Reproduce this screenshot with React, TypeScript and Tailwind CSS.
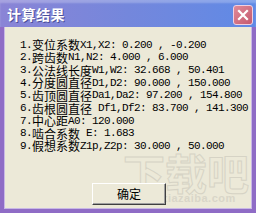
import React from "react";

const lines = [
  "1.变位系数X1,X2: 0.200 , -0.200",
  "2.跨齿数N1,N2: 4.000 , 6.000",
  "3.公法线长度W1,W2: 32.668 , 50.401",
  "4.分度圆直径D1,D2: 90.000 , 150.000",
  "5.齿顶圆直径Da1,Da2: 97.200 , 154.800",
  "6.齿根圆直径 Df1,Df2: 83.700 , 141.300",
  "7.中心距A0: 120.000",
  "8.啮合系数 E: 1.683",
  "9.假想系数Z1p,Z2p: 30.000 , 50.000",
];

function Line({ text }: { text: string }) {
  const parts = text.match(/[\u4e00-\u9fff]+|[^\u4e00-\u9fff]+/g) || [];
  return (
    <div className="flex h-[12.65px] items-center whitespace-pre">
      {parts.map((p, i) =>
        /[\u4e00-\u9fff]/.test(p) ? (
          <span
            key={i}
            className="text-[12px] leading-none text-black [font-family:'Noto_Sans_CJK_SC',sans-serif]"
          >
            {p}
          </span>
        ) : (
          <span
            key={i}
            className="text-[11px] leading-none tracking-[-0.6px] text-black [font-family:'Liberation_Mono',monospace]"
          >
            {p}
          </span>
        )
      )}
    </div>
  );
}

export default function App() {
  return (
    <div className="relative flex h-[213px] w-[256px] flex-col overflow-hidden bg-[#8f6cc6]">
      {/* Title bar */}
      <div className="flex h-[27px] shrink-0 items-center justify-between bg-gradient-to-r from-[#8a84d6] via-[#7487dc] to-[#5f8ae6] pl-[7px] pr-[3px] shadow-[inset_0_3px_2px_rgba(255,255,255,0.25)]">
        <div className="text-[14px] font-bold leading-none tracking-[0.5px] text-white [font-family:'Noto_Sans_CJK_SC',sans-serif] [text-shadow:1px_1px_0_#4a4f9a]">
          计算结果
        </div>
        <div className="mt-[2px] flex h-[20px] w-[20px] items-center justify-center rounded-[3px] border border-[#f0d0e0] bg-gradient-to-br from-[#e08a98] to-[#c45a70]">
          <svg width="12" height="12" viewBox="0 0 12 12">
            <path d="M2 2 L10 10 M10 2 L2 10" stroke="white" strokeWidth="2.2" strokeLinecap="square" />
          </svg>
        </div>
      </div>
      {/* Body */}
      <div className="flex flex-1 flex-col px-[4px] pb-[4px]">
        <div className="relative flex flex-1 flex-col border-l border-r border-b border-[#c9b8e6] bg-[#ece9d8]">
          {/* watermark */}
          <div className="pointer-events-none absolute left-[118px] top-[124px] flex flex-col items-start">
            <span className="text-[42px] font-bold leading-none text-transparent [font-family:'Noto_Sans_CJK_SC',sans-serif] [-webkit-text-stroke:1px_#d6d3c5]">
              下载吧
            </span>
            <span className="ml-[8px] mt-[0px] text-[11px] font-bold leading-none tracking-[0.5px] text-[#d9d6c8] [font-family:'Liberation_Sans',sans-serif]">
              www.xiazaiba.com
            </span>
          </div>
          <div className="relative flex flex-col pl-[15px] pt-[12px]">
            {lines.map((l, i) => (
              <Line key={i} text={l} />
            ))}
          </div>
          <div className="relative mt-[30px] flex pl-[87px]">
            <div className="flex h-[22px] w-[74px] items-center justify-center border border-t-white border-l-white border-r-[#404040] border-b-[#404040] bg-[#ece9d8] shadow-[inset_-1px_-1px_0_#a0a0a0]">
              <span className="text-[12px] leading-none text-black [font-family:'Noto_Sans_CJK_SC',sans-serif]">
                确定
              </span>
            </div>
          </div>
        </div>
      </div>
    </div>
  );
}
